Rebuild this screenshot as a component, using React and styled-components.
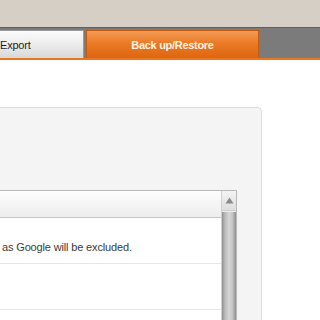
import React from "react";
import styled, { createGlobalStyle } from "styled-components";

const GlobalStyle = createGlobalStyle`
  html, body {
    margin: 0;
    padding: 0;
    background: #ffffff;
    font-family: "Liberation Sans", Arial, sans-serif;
  }
  body {
    width: 320px;
    height: 320px;
    overflow: hidden;
  }
`;

const Page = styled.div`
  width: 320px;
  height: 320px;
  overflow: hidden;
  display: flex;
  flex-direction: column;
  & > * {
    flex-shrink: 0;
  }
`;

const TopBar = styled.div`
  height: 27px;
  background: #d5cfc5;
`;

const TabBar = styled.div`
  height: 33px;
  box-sizing: border-box;
  background: #7b7b7b;
  border-top: 1px solid #5f5f5f;
  border-bottom: 2px solid #e9771f;
  display: flex;
  align-items: flex-end;
  gap: 2px;
`;

const Tab = styled.div`
  height: 28px;
  box-sizing: border-box;
  display: flex;
  align-items: center;
  font-size: 11px;
  letter-spacing: ${(p) => (p.$active ? "-0.3px" : "-0.2px")};
  width: ${(p) => p.$width}px;
  justify-content: ${(p) => (p.$active ? "center" : "flex-start")};
  color: ${(p) => (p.$active ? "#fff3e6" : "#1e1e1e")};
  font-weight: ${(p) => (p.$active ? "bold" : "normal")};
  background: ${(p) =>
    p.$active
      ? "linear-gradient(to bottom, #f29b55 0%, #ec7a25 45%, #dd6610 100%)"
      : "linear-gradient(to bottom, #fbfbfb 0%, #ececec 50%, #d8d8d8 100%)"};
  border: 1px solid ${(p) => (p.$active ? "#c45a10" : "#9a9a9a")};
  border-left: ${(p) => (p.$active ? "1px solid #c45a10" : "none")};
  border-bottom: none;
`;

const Spacer = styled.div`
  height: 47px;
`;

const Panel = styled.div`
  margin-left: -10px;
  width: 272px;
  height: 220px;
  box-sizing: border-box;
  background: #f4f4f4;
  border: 1px solid #dedede;
  border-bottom: none;
  border-top-right-radius: 5px;
  padding: 0 24px 0 0;
  display: flex;
  flex-direction: column;
`;

const Divider = styled.div`
  margin-top: 46px;
  height: 1px;
  background: #dadada;
`;

const Table = styled.div`
  margin-top: 36px;
  flex: 1;
  background: #ffffff;
  border: 1px solid #b9b9b9;
  border-bottom: none;
  display: flex;
`;

const Body = styled.div`
  flex: 1;
  display: flex;
  flex-direction: column;
`;

const HeaderRow = styled.div`
  height: 26px;
  flex-shrink: 0;
  background: linear-gradient(to bottom, #fdfdfd, #ededed);
  border-bottom: 1px solid #c6c6c6;
`;

const Row = styled.div`
  height: 46px;
  flex-shrink: 0;
  box-sizing: border-box;
  border-bottom: 1px solid #e6e6e6;
  padding: 22px 0 0 10px;
  font-size: 11px;
  letter-spacing: -0.15px;
  line-height: 15px;
  color: #3a3a3a;
  white-space: nowrap;
`;

const Scrollbar = styled.div`
  width: 14px;
  display: flex;
  flex-direction: column;
  background: #ececec;
  border-left: 1px solid #d0d0d0;
`;

const ArrowButton = styled.div`
  height: 19px;
  display: flex;
  align-items: center;
  justify-content: center;
  background: linear-gradient(to bottom, #f3f3f3, #dedede);
  border-bottom: 1px solid #cfcfcf;
`;

const Thumb = styled.div`
  flex: 1;
  margin-top: 1px;
  background: linear-gradient(
    to right,
    #8f8f8f 0%,
    #b9b9b9 20%,
    #d6d6d6 50%,
    #c4c4c4 75%,
    #8f8f8f 100%
  );
`;

export default function App() {
  return (
    <>
      <GlobalStyle />
      <Page>
        <TopBar />
        <TabBar>
          <Tab $width={84}>Export</Tab>
          <Tab $width={173} $active>
            Back up/Restore
          </Tab>
        </TabBar>
        <Spacer />
        <Panel>
          <Divider />
          <Table>
            <Body>
              <HeaderRow />
              <Row>as Google will be excluded.</Row>
              <Row />
              <Row />
            </Body>
            <Scrollbar>
              <ArrowButton>
                <svg width="9" height="7" viewBox="0 0 9 7">
                  <path d="M4.5 0.5 L8.5 6.5 L0.5 6.5 Z" fill="#8a8a8a" />
                </svg>
              </ArrowButton>
              <Thumb />
            </Scrollbar>
          </Table>
        </Panel>
      </Page>
    </>
  );
}
